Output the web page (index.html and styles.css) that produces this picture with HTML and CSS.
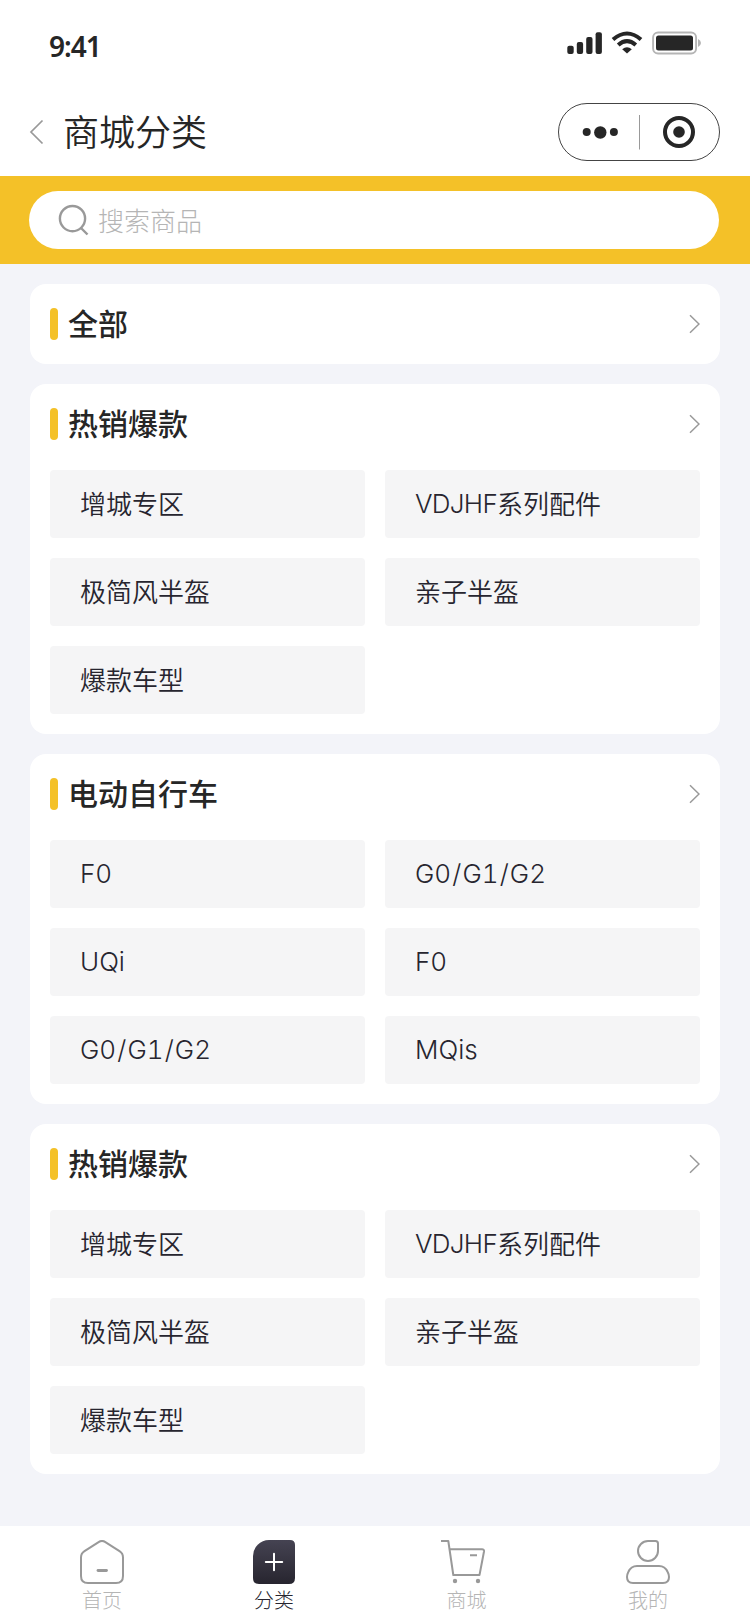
FILE: index.html
```html
<!DOCTYPE html>
<html lang="zh-CN">
<head>
<meta charset="utf-8">
<title>商城分类</title>
<link rel="stylesheet" href="styles.css">
</head>
<body>
<div class="page">
  <div class="status">
    <span class="time">9:41</span>
    <svg class="status-icons" width="136" height="26" viewBox="566 29.700 136 26">
      <g fill="#262626">
        <rect x="567.3" y="45.5" width="6.4" height="8.3" rx="2"/>
        <rect x="576.8" y="41.7" width="6.3" height="12.1" rx="2"/>
        <rect x="586.2" y="36.8" width="6.3" height="17" rx="2"/>
        <rect x="595.6" y="32" width="6.3" height="21.8" rx="2"/>
        <path d="M627 53.300 L622.2 48.900 Q627 45 631.800 48.900 Z"/>
      </g>
      <g fill="none" stroke="#262626" stroke-width="4">
        <path d="M613 39.200 Q627 27.200 641 39.200"/>
        <path d="M618.200 44.800 Q627 37 635.800 44.800"/>
      </g>
      <rect x="653.1" y="32.200" width="43" height="21" rx="5" fill="none" stroke="#b5b5b5" stroke-width="1.900"/>
      <rect x="656" y="35.200" width="37" height="15" rx="2.500" fill="#262626"/>
      <path d="M698 38.700 Q701 40.200 701 42.700 T698 46.700 Z" fill="#b5b5b5"/>
    </svg>
  </div>
  <header class="nav">
    <svg class="back" width="16" height="26" viewBox="0 0 16 26"><path d="M13.500 1.500 L2 13 L13.500 24.500" fill="none" stroke="#999" stroke-width="1.700"/></svg>
    <h1 class="title">商城分类</h1>
    <svg width="162" height="58" viewBox="0 0 162 58">
      <rect x=".5" y=".5" width="161" height="57" rx="28.500" fill="#fff" stroke="#444"/>
      <g fill="#262626"><circle cx="28.700" cy="29" r="4"/><circle cx="42.300" cy="29.500" r="6.200"/><circle cx="55.900" cy="29" r="4"/><circle cx="121" cy="29" r="5.800"/></g>
      <path d="M81.500 12V46.500" stroke="#999"/>
      <circle cx="121" cy="29" r="14" fill="none" stroke="#262626" stroke-width="4"/>
    </svg>
  </header>
  <div class="search-bar">
    <div class="search">
      <svg width="32" height="32" viewBox="0 0 32 32" fill="none" stroke="#999" stroke-width="2.400"><circle cx="14.500" cy="14.600" r="12.600"/><path d="M22.500 23.500 L29.500 30.500"/></svg>
      <span class="placeholder">搜索商品</span>
    </div>
  </div>
  <main class="list">
    <section class="card">
      <div class="head"><i class="mark"></i><h2>全部</h2><svg class="arrow" width="12" height="20" viewBox="0 0 12 20"><path d="M2 1.200 L11 10 L2 18.800"/></svg></div>
    </section>
    <section class="card">
      <div class="head"><i class="mark"></i><h2>热销爆款</h2><svg class="arrow" width="12" height="20" viewBox="0 0 12 20"><path d="M2 1.200 L11 10 L2 18.800"/></svg></div>
      <div class="grid"><div class="cell">增城专区</div><div class="cell"><span class="latin">VDJHF</span>系列配件</div><div class="cell">极简风半盔</div><div class="cell">亲子半盔</div><div class="cell">爆款车型</div></div>
    </section>
    <section class="card">
      <div class="head"><i class="mark"></i><h2>电动自行车</h2><svg class="arrow" width="12" height="20" viewBox="0 0 12 20"><path d="M2 1.200 L11 10 L2 18.800"/></svg></div>
      <div class="grid"><div class="cell model">F0</div><div class="cell model">G0<span class="slash">/</span>G1<span class="slash">/</span>G2</div><div class="cell model">UQi</div><div class="cell model">F0</div><div class="cell model">G0<span class="slash">/</span>G1<span class="slash">/</span>G2</div><div class="cell model">MQis</div></div>
    </section>
    <section class="card">
      <div class="head"><i class="mark"></i><h2>热销爆款</h2><svg class="arrow" width="12" height="20" viewBox="0 0 12 20"><path d="M2 1.200 L11 10 L2 18.800"/></svg></div>
      <div class="grid"><div class="cell">增城专区</div><div class="cell"><span class="latin">VDJHF</span>系列配件</div><div class="cell">极简风半盔</div><div class="cell">亲子半盔</div><div class="cell">爆款车型</div></div>
    </section>
  </main>
  <nav class="tabs">
    <a class="tab tab-home">
      <svg width="44" height="44" viewBox="0 0 44 44" fill="none" stroke="#999" stroke-width="2"><path d="M19 1.900 Q22 0 25 1.900 L39.500 11.200 Q43 13.500 43 17.500 V36 Q43 43 36 43 H8 Q1 43 1 36 V17.500 Q1 13.500 4.500 11.200 Z"/><path d="M18 30.500H26.500" stroke-width="2.800" stroke-linecap="round"/></svg>
      <span>首页</span>
    </a>
    <a class="tab tab-category">
      <svg width="44" height="44" viewBox="0 0 44 44"><defs><linearGradient id="ink" x1="0" y1="0" x2="0" y2="1"><stop offset="0" stop-color="#454352"/><stop offset="1" stop-color="#27252f"/></linearGradient></defs><path d="M17 0H38Q43 0 43 5V38Q43 44 37 44H7Q1 44 1 38V16A16 16 0 0 1 17 0Z" fill="url(#ink)"/><path d="M13.800 22H30.200M22 13.800V30.200" stroke="#fff" stroke-width="2" stroke-linecap="round"/></svg>
      <span>分类</span>
    </a>
    <a class="tab tab-shop">
      <svg width="44" height="44" viewBox="0 0 44 44" fill="none" stroke="#999" stroke-width="2" stroke-linejoin="round"><path d="M0 1H7.300L12.300 35H38.500L43 11.500Q43.300 9.300 41 9.300H8.500M29 15.300H36"/><g fill="#999" stroke="none"><circle cx="14" cy="41" r="2.200"/><circle cx="37" cy="41" r="2.200"/></g></svg>
      <span>商城</span>
    </a>
    <a class="tab tab-mine">
      <svg width="44" height="44" viewBox="0 0 44 44" fill="none" stroke="#999" stroke-width="2"><path d="M22 1H29.500Q32 1 32 3.500V11A10 10 0 1 1 22 1Z"/><path d="M11 26H33Q39 26 41.700 32Q43 34.500 43 37Q43 43 37 43H7Q1 43 1 37Q1 34.500 2.300 32Q5 26 11 26Z"/></svg>
      <span>我的</span>
    </a>
  </nav>
</div>
</body>
</html>
```
FILE: styles.css
```css
* { box-sizing: border-box; }
body { margin: 0; font-family: Inter, "Noto Sans CJK SC", sans-serif; color: #262626; }
svg { display: block; flex: none; }
.page { width: 750px; height: 1624px; display: flex; flex-direction: column; background: #f3f4f9; }
.status { height: 88px; padding: 30px 48px 0 49px; display: flex; justify-content: space-between; align-items: flex-start; background: #fff; }
.time { font: 600 28px/32px "Noto Sans", sans-serif; letter-spacing: -1px; }
.nav { height: 88px; padding: 0 30px 0 29px; display: flex; align-items: center; background: #fff; }
.title { flex: 1; margin: 2px 0 0 18px; font-size: 36px; line-height: 52px; font-weight: 350; }
.search-bar { height: 88px; padding: 15px 31px 15px 29px; background: #f4c128; }
.search { height: 58px; padding-left: 29px; display: flex; align-items: center; gap: 8px; background: #fff; border-radius: 29px; }
.placeholder { padding-top: 3px; font-size: 26px; line-height: 38px; font-weight: 300; color: #b5b5b5; }
.list { flex: 1; padding: 20px 30px; display: flex; flex-direction: column; gap: 20px; }
.card { background: #fff; border-radius: 16px; }
.head { height: 80px; padding: 0 20px; display: flex; align-items: center; }
.mark { width: 8px; height: 32px; border-radius: 4px; background: #f4c128; }
.head h2 { flex: 1; margin: 0 0 0 10px; font-size: 30px; line-height: 44px; font-weight: 500; }
.arrow { fill: none; stroke: #999; stroke-width: 1.5; }
.grid { padding: 6px 20px 20px; display: grid; grid-template-columns: 315px 315px; gap: 20px; }
.cell { height: 68px; padding: 1px 0 0 30px; border-radius: 4px; background: #f5f5f6; color: #27252f; font-size: 26px; line-height: 67px; font-weight: 350; font-feature-settings: "tnum"; }
.model { padding-top: 0; }
.latin { letter-spacing: -0.7px; line-height: 1; vertical-align: 1px; }
.slash { padding: 0 1.1px; }
.tabs { height: 98px; padding: 14px 80px 0; display: flex; background: #fff; }
.tab { width: 44px; display: flex; flex-direction: column; align-items: center; gap: 2px; font-size: 20px; line-height: 30px; font-weight: 300; color: #b5b5b5; white-space: nowrap; }
.tab-category { margin-left: 128px; color: #27252f; }
.tab-shop { margin-left: 145px; }
.tab-shop span { margin-left: 7px; }
.tab-mine { margin-left: 141px; }
```
